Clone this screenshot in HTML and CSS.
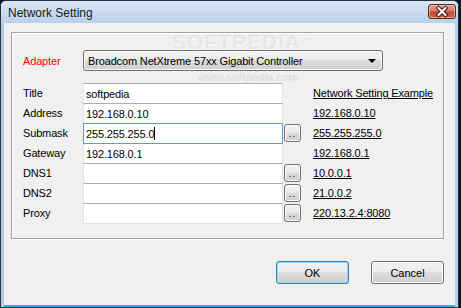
FILE: index.html
```html
<!DOCTYPE html>
<html lang="en">
<head>
    <meta charset="UTF-8">
    <title>Network Setting</title>
    <link rel="stylesheet" href="styles.css">
</head>
<body>
    <div class="window">
        <div class="titlebar">
            <span class="title">Network Setting</span>
            <div class="close-btn">
                <svg width="28" height="15" viewBox="0 0 28 15">
                    <path d="M10.5 4 L17.5 11 M17.5 4 L10.5 11" stroke="#3b1612" stroke-width="4" stroke-linecap="square"/>
                    <path d="M10.5 4 L17.5 11 M17.5 4 L10.5 11" stroke="#fff" stroke-width="2" stroke-linecap="square"/>
                </svg>
            </div>
        </div>

        <div class="client">
            <!-- faint site watermark over the dialog -->
            <div class="watermark">SOFTPEDIA<sup>™</sup></div>
            <div class="watermark-url">www.softpedia.com</div>

            <div class="group">
                <div class="adapter-row">
                    <span class="adapter-label">Adapter</span>
                    <div class="combo">
                        <span>Broadcom NetXtreme 57xx Gigabit Controller</span>
                        <span class="combo-arrow"></span>
                    </div>
                </div>

                <div class="fields">
                    <span class="field-label">Title</span>
                    <div class="textbox">softpedia</div>
                    <span></span>
                    <span class="example head">Network Setting Example</span>

                    <span class="field-label">Address</span>
                    <div class="textbox">192.168.0.10</div>
                    <span></span>
                    <span class="example">192.168.0.10</span>

                    <span class="field-label">Submask</span>
                    <div class="textbox focused">255.255.255.0<span class="caret"></span></div>
                    <div class="dots-btn">..</div>
                    <span class="example">255.255.255.0</span>

                    <span class="field-label">Gateway</span>
                    <div class="textbox">192.168.0.1</div>
                    <span></span>
                    <span class="example">192.168.0.1</span>

                    <span class="field-label">DNS1</span>
                    <div class="textbox"></div>
                    <div class="dots-btn">..</div>
                    <span class="example">10.0.0.1</span>

                    <span class="field-label">DNS2</span>
                    <div class="textbox"></div>
                    <div class="dots-btn">..</div>
                    <span class="example">21.0.0.2</span>

                    <span class="field-label">Proxy</span>
                    <div class="textbox"></div>
                    <div class="dots-btn">..</div>
                    <span class="example">220.13.2.4:8080</span>
                </div>
            </div>

            <div class="actions">
                <button class="btn btn-default">OK</button>
                <button class="btn">Cancel</button>
            </div>
        </div>
    </div>
</body>
</html>
```

FILE: styles.css
```css
* {
    margin: 0;
    padding: 0;
    box-sizing: border-box;
}

body {
    width: 461px;
    height: 308px;
    background: #101418;
    font-family: "Liberation Sans", Arial, sans-serif;
    font-size: 11px;
    letter-spacing: -0.15px;
    color: #000;
    overflow: hidden;
}

.window {
    width: 459px;
    height: 308px;
    border: 1px solid #26323f;
    border-radius: 6px 6px 0 0;
    background: #b3cde8;
    display: flex;
    flex-direction: column;
    padding: 0 3px 0 3px;
}

.titlebar {
    height: 22px;
    margin: 0 -3px;
    padding: 0 0 0 7px;
    border-radius: 5px 5px 0 0;
    background: linear-gradient(#dce8f5, #c3d8ee 60%, #b9d1ea);
    display: flex;
    align-items: center;
    justify-content: space-between;
}

.title {
    font-size: 12px;
    letter-spacing: 0;
    color: #1a1a1a;
    margin-top: 1px;
}

.close-btn {
    width: 28px;
    height: 15px;
    margin: 0 2px 1px 0;
    border: 1px solid #5a2620;
    border-radius: 3px;
    background: linear-gradient(#e4a89c, #d37a66 45%, #c4452f 55%, #d06a50);
    box-shadow: inset 0 0 0 1px rgba(255, 220, 210, 0.5);
    overflow: hidden;
}

.close-btn svg {
    display: block;
    margin: -1px 0 0 -1px;
}

.client {
    flex: 1;
    position: relative;
    background: #f0f0f0;
    padding: 9px 11px 0 7px;
    border-bottom: 2px solid #35aee3;
}

.watermark {
    position: absolute;
    left: 168px;
    top: 10px;
    font-size: 21px;
    line-height: 17px;
    font-weight: bold;
    letter-spacing: 1px;
    color: #e6e6e6;
    text-shadow: 1px 1px 0 #fafafa;
    pointer-events: none;
}

.watermark sup {
    font-size: 7px;
    font-weight: normal;
    vertical-align: top;
}

.watermark-url {
    position: absolute;
    left: 194px;
    top: 48px;
    font-size: 11px;
    font-weight: bold;
    color: #e0e0e0;
    pointer-events: none;
}

.group {
    position: relative;
    height: 207px;
    border: 1px solid #a0a0a0;
    box-shadow: 1px 1px 0 #fff, inset 1px 1px 0 #fff;
    padding: 17px 0 0 11px;
}

.adapter-row {
    display: flex;
    align-items: center;
    height: 21px;
}

.adapter-label {
    width: 60px;
    color: #ff0000;
}

.combo {
    width: 300px;
    height: 21px;
    border: 1px solid #707070;
    border-radius: 3px;
    background: linear-gradient(#f2f2f2, #ebebeb 50%, #dddddd 50%, #cfcfcf);
    box-shadow: inset 0 0 0 1px #fbfbfb;
    display: flex;
    align-items: center;
    justify-content: space-between;
    padding: 0 5px 0 4px;
}

.combo-arrow {
    width: 0;
    height: 0;
    border-left: 4px solid transparent;
    border-right: 4px solid transparent;
    border-top: 4px solid #000;
    margin-right: 1px;
}

.fields {
    margin-top: 12px;
    display: grid;
    grid-template-columns: 60px 200px 30px auto;
    grid-auto-rows: 20px;
    align-items: center;
}

.textbox {
    height: 21px;
    align-self: start;
    border: 1px solid #e2e3ea;
    border-top-color: #abadb3;
    background: #fff;
    padding: 0 2px;
    display: flex;
    align-items: center;
}

.textbox.focused {
    border-color: #5b9fd8;
    position: relative;
    z-index: 1;
}

.caret {
    display: inline-block;
    width: 1px;
    height: 13px;
    background: #000;
}

.dots-btn {
    width: 17px;
    height: 18px;
    margin-left: 1px;
    border: 1px solid #707070;
    border-radius: 3px;
    background: linear-gradient(#f2f2f2, #ebebeb 50%, #dddddd 50%, #cfcfcf);
    box-shadow: inset 0 0 0 1px #fbfbfb;
    font-size: 10px;
    line-height: 18px;
    text-align: center;
    letter-spacing: 1px;
}

.example {
    text-decoration: underline;
    white-space: nowrap;
}

.actions {
    display: flex;
    justify-content: flex-end;
    gap: 22px;
    margin-top: 22px;
}

.btn {
    width: 73px;
    height: 23px;
    border: 1px solid #707070;
    border-radius: 3px;
    background: linear-gradient(#f2f2f2, #ebebeb 50%, #dddddd 50%, #cfcfcf);
    box-shadow: inset 0 0 0 1px #fbfbfb;
    font-family: "Liberation Sans", Arial, sans-serif;
    font-size: 11px;
    color: #000;
}

.btn-default {
    border-color: #3c7fb1;
    box-shadow: inset 0 0 0 1px #8ed6f7;
}
```
